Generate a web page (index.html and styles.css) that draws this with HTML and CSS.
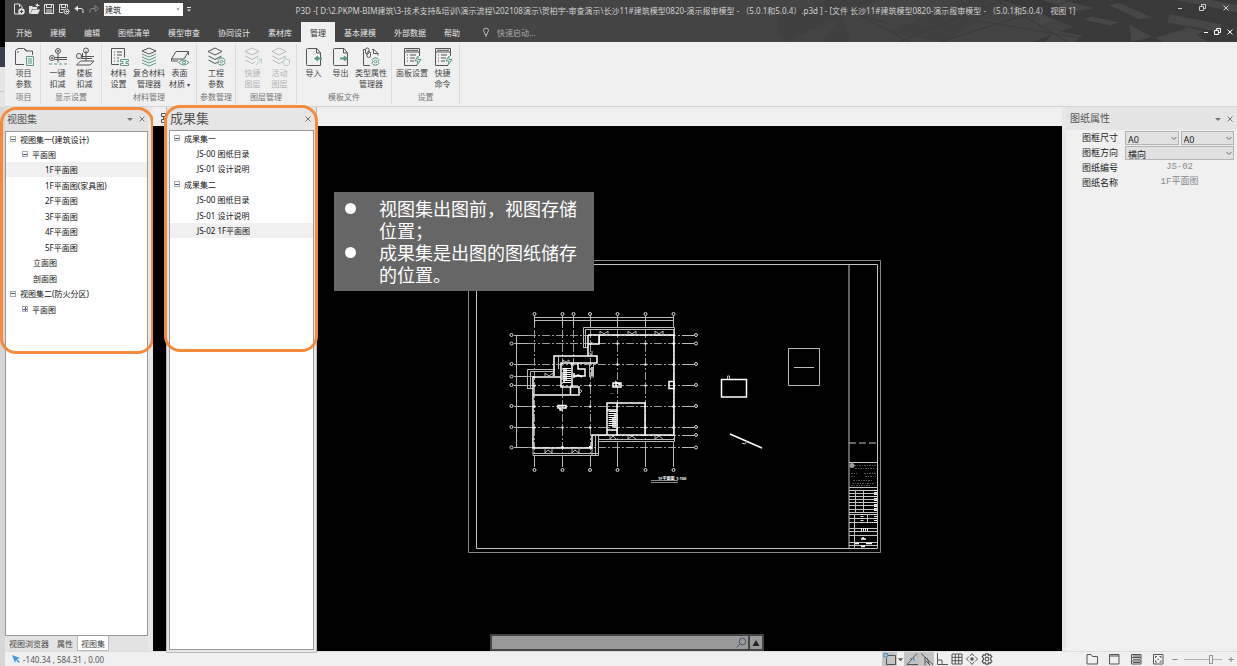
FILE: index.html
```html
<!DOCTYPE html>
<html lang="zh-CN">
<head>
<meta charset="utf-8">
<title>P3D</title>
<link rel="stylesheet" href="styles.css">
</head>
<body>
<svg class="defs" aria-hidden="true">
  <defs>
    <symbol id="i-doc" viewBox="0 0 20 20"><path d="M13 1.500H3.500Q2.500 1.500 2.500 2.500V17.500Q2.500 18.500 3.500 18.500H16.500V6zM12.500 1.500V6H16.500"/></symbol>
    <symbol id="i-layers" viewBox="0 0 20 20"><path d="M9 1 16 4.500 9 8 2 4.500zM2.500 9 9 12.500 15.500 9M2.500 13 9 16.500 12 15"/></symbol>
    <symbol id="i-gear" viewBox="0 0 10 10"><path d="M4 .7h2l.4 1.300 1.300-.5L9 3 8 4.300v1.200L9 7 7.700 8.500 6.400 8 6 9.300H4L3.600 8l-1.300.5L1 7l1-1.500V4.300L1 3l1.300-1.500 1.300.5z"/><circle cx="5" cy="5" r="1.500"/></symbol>
    <symbol id="i-panel" viewBox="0 0 20 20"><path d="M15 18.500H2.500V1.500H17.500V9M2.500 5H17.500M4 3.300H16M5 8h1M8 8h6M5 11h1M8 11h5M5 14h1M8 14h4"/><path class="green" d="M16 9 13 14h3l-1 4 4-5.500h-3z"/></symbol>
    <symbol id="i-restore" viewBox="0 0 8 8"><path d="M2.500 2.500V.5h4v4h-2M.5 2.500h4v4h-4z"/></symbol>
    <symbol id="i-close" viewBox="0 0 8 8"><path d="m1.500 1.500 5 5m0-5-5 5"/></symbol>
    <symbol id="i-min" viewBox="0 0 8 8"><path d="M2 4.500h4"/></symbol>
    <symbol id="i-chev" viewBox="0 0 8 8"><path d="m1.500 3 2.500 2.500L6.500 3"/></symbol>
    <symbol id="i-down" viewBox="0 0 8 8"><path class="solid" d="M1 3h6L4 6z"/></symbol>
  </defs>
</svg>
<div class="screen">
  <div class="edge"></div>
  <div class="app">
    <header class="head">
      <svg class="head-art" viewBox="0 0 460 41" preserveAspectRatio="xMaxYMid slice" aria-hidden="true">
        <path class="dim" d="M55 41 75 14 83 41zM120 32 190 0h45l-60 41zM0 20 60 0h50L20 41z"/>
        <path class="dark" d="M230 0H460V41H260l40-15-45-18z"/>
        <path class="lite" d="m290 0 30 8-18 3-32-11zM318 16l28 6-10 3-26-6zM345 3l32 14-12 2-30-14zM355 24l22 12-20 5zM394 14l52 10-4 7-50-9zM400 0l60 12V5L435 0zM283 30l26 5-8 6h-28zM380 37l30-9 22 13h-44zM265 14l16 5-20 8zM408 26l20 4-9 5z"/>
        <path class="ray" d="M90 14 140 41M130 41 230 0M170 41 300 0M205 20 330 41M225 0l70 41M60 5l60 18"/>
      </svg>
      <div class="titlebar">
        <div class="qat">
          <button aria-label="新建"><svg viewBox="0 0 12 12"><path d="M7 11H1.500V1h5L9 3.500V5M6.500 1v3"/><circle class="solid" cx="8.500" cy="8.500" r="3.200"/><path class="cut" d="M8.500 6.800v3.400M6.800 8.500h3.400"/></svg></button>
          <button aria-label="打开"><svg viewBox="0 0 12 12"><path class="solid" d="M1 10.500V3h3l1 1h4v2H4L2.500 10.500zM4.500 6.500H12l-2 4.500H2.500zM7 2l3-1.500V2h1.500v1H10v1z"/></svg></button>
          <button aria-label="保存"><svg viewBox="0 0 12 12"><path d="M1.500 1.500h9v9h-9zM3.500 1.500v3h5v-3M3 7h6M3 9h6"/></svg></button>
          <button aria-label="另存为"><svg viewBox="0 0 12 12"><path d="M5 9.500H1.500v-8h8v3M3.500 1.500v3h4v-3M3 6.500h3"/><circle cx="8.500" cy="8.500" r="2.500"/><path d="M7.500 8.500h3M8.500 7.500v2"/></svg></button>
          <button aria-label="撤销"><svg viewBox="0 0 12 12"><path class="solid" d="M1.500 5.500 5 2.500v6z"/><path d="M4 5.500h4q2 0 2 2V10"/></svg></button>
          <button class="off" aria-label="重做"><svg viewBox="0 0 12 12"><path d="M10.500 5.500 7 2.500v6zM7 5.500H4q-2 0-2 2V10"/></svg></button>
          <label class="combo"><select aria-label="专业"><option>建筑</option></select><svg viewBox="0 0 8 8" aria-hidden="true"><path class="solid" d="M2.500 3.500h3L4 5z"/></svg></label>
          <button class="more" aria-label="自定义工具栏"><svg viewBox="0 0 12 12"><path d="M4 4.500h4"/><path class="solid" d="M4 6.500h4l-2 2z"/></svg></button>
        </div>
        <h1 class="title">P3D -[ D:\2.PKPM-BIM建筑\3-技术支持&amp;培训\演示流程\202108演示\贺柏宇-审查演示\长沙11#建筑模型0820-演示报审模型 - （5.0.1和5.0.4）.p3d ] - [文件 长沙11#建筑模型0820-演示报审模型 - （5.0.1和5.0.4） 视图 1]</h1>
        <div class="win wide">
          <button aria-label="最小化"><svg><use href="#i-min"/></svg></button>
          <button aria-label="还原"><svg><use href="#i-restore"/></svg></button>
          <button aria-label="关闭"><svg><use href="#i-close"/></svg></button>
        </div>
      </div>
      <div class="menubar">
        <nav class="tabs">
          <button>开始</button><button>建模</button><button>编辑</button><button>图纸清单</button><button>模型审查</button><button>协同设计</button><button>素材库</button><button class="on">管理</button><button>基本建模</button><button>外部数据</button><button>帮助</button>
        </nav>
        <label class="quick"><svg viewBox="0 0 8 10" aria-hidden="true"><path d="M3 7.500Q3 6 2 5 1 3 2.200 1.700 4 .3 5.800 1.700 7 3 6 5 5 6 5 7.500zM3 9h2"/></svg><input type="text" placeholder="快速启动..." aria-label="快速启动"></label>
        <div class="win">
          <button aria-label="最小化文档"><svg><use href="#i-min"/></svg></button>
          <button aria-label="还原文档"><svg><use href="#i-restore"/></svg></button>
          <button aria-label="关闭文档"><svg><use href="#i-close"/></svg></button>
        </div>
      </div>
    </header>

    <section class="ribbon" aria-label="管理">
      <div class="group">
        <div class="tools">
          <button><svg viewBox="0 0 20 20"><path d="M10 17.500H1.500v-14L4 1.500h5.500L12 4h6.500v4M3 5h2M10 1.500 13 4"/><path class="green" d="M12.500 9.500h7v9h-7zM14 12h4M14 14h4M14 16h4"/></svg>项目<br>参数</button>
        </div>
        <h2>项目</h2>
      </div>
      <div class="group">
        <div class="tools">
          <button><svg viewBox="0 0 20 20"><circle cx="10" cy="4" r="2.500"/><circle cx="10" cy="4" r=".7"/><circle cx="4" cy="11" r="2.500"/><circle cx="4" cy="11" r=".7"/><path d="M10 6.500V15.500M6.500 10.500H19M6.500 12.500H19"/><path class="green" d="M1 17h3m2 0h3m2 0h3m2 0h3"/></svg>一键<br>扣减</button>
          <button><svg viewBox="0 0 20 20"><circle cx="11" cy="3.500" r="2.500"/><circle cx="4" cy="9" r="2.500"/><path d="M11 3.500V14M6 9.500h13M6 11.500h11M2 17.500 5.500 14H19l-4 4H1.500zM7.500 6v6"/></svg>楼板<br>扣减</button>
        </div>
        <h2>显示设置</h2>
      </div>
      <div class="group">
        <div class="tools">
          <button><svg viewBox="0 0 20 20"><path d="M10 17.500H2.500v-16h13v9M5 5h1M8 5h5M5 8h1M8 8h5M5 11h1M8 11h2M5 14h1M8 14h2"/><path class="green" d="M11.500 12.500h8v2H17v2h2.500v2h-8v-2H14v-2h-2.500z"/></svg>材料<br>设置</button>
          <button class="w"><svg viewBox="0 0 20 20"><path d="M10 1 17 4 10 7 3 4z"/><path class="green" d="m3 7 7 3 7-3M3 10l7 3 7-3M3 13l7 3 7-3M3 16l7 3 7-3"/></svg>复合材料<br>管理器</button>
          <button><svg viewBox="0 0 20 20"><path d="M6 4.500h12.500L14 12H1.500zM1.500 12v2H8M18.500 4.500V8"/><path class="green" d="M8.500 15.500q5-5 10.500 0-5 5-10.500 0z"/><circle class="green" cx="14" cy="15.500" r="1.500"/></svg>表面<br>材质 <span class="caret">▾</span></button>
        </div>
        <h2>材料管理</h2>
      </div>
      <div class="group">
        <div class="tools">
          <button><svg viewBox="0 0 20 20"><use href="#i-layers"/><use class="green" href="#i-gear" x="11" y="10" width="9" height="9"/></svg>工程<br>参数</button>
        </div>
        <h2>参数管理</h2>
      </div>
      <div class="group">
        <div class="tools">
          <button disabled><svg viewBox="0 0 20 20"><use href="#i-layers"/><path class="green" d="m13 18 5-5m-4-1h4.500v4.500"/></svg>快捷<br>图层</button>
          <button disabled><svg viewBox="0 0 20 20"><use href="#i-layers"/><path class="green" d="M14 15V9.500h1.500V12l4 1v3.500l-1.500 2h-3L12 15z"/></svg>活动<br>图层</button>
        </div>
        <h2>图层管理</h2>
      </div>
      <div class="group">
        <div class="tools">
          <button><svg viewBox="0 0 20 20"><use href="#i-doc"/><path class="green thick" d="M18 11.500h-6m2-2-2.500 2 2.500 2"/></svg>导入</button>
          <button><svg viewBox="0 0 20 20"><use href="#i-doc"/><path class="green thick" d="M9 11.500h6m-2-2 2.500 2-2.500 2"/></svg>导出</button>
          <button class="w"><svg viewBox="0 0 20 20"><path d="M9 18.500H2.500v-16H4M11 2.500h2l4 4v2M12.500 2.500v4H17"/><rect x="4.500" y="1" width="3.500" height="6" rx="1.700"/><rect x="6" y="4.500" width="3.500" height="6" rx="1.700"/><use class="green" href="#i-gear" x="10" y="10" width="9" height="9"/></svg>类型属性<br>管理器</button>
        </div>
        <h2>模板文件</h2>
      </div>
      <div class="group">
        <div class="tools">
          <button class="w"><svg><use href="#i-panel"/></svg>面板设置</button>
          <button><svg><use href="#i-panel"/></svg>快捷<br>命令</button>
        </div>
        <h2>设置</h2>
      </div>
    </section>

    <main class="work">
      <aside class="dock">
        <div class="bar"><h3>视图集</h3><button aria-label="菜单"><svg><use href="#i-down"/></svg></button><button aria-label="关闭"><svg><use href="#i-close"/></svg></button></div>
        <ul class="tree">
          <li><i class="box"></i>视图集一(建筑设计)</li>
          <li class="l1"><i class="box"></i>平面图</li>
          <li class="l3 sel">1F平面图</li>
          <li class="l3">1F平面图(家具图)</li>
          <li class="l3">2F平面图</li>
          <li class="l3">3F平面图</li>
          <li class="l3">4F平面图</li>
          <li class="l3">5F平面图</li>
          <li class="l2">立面图</li>
          <li class="l2">剖面图</li>
          <li><i class="box"></i>视图集二(防火分区)</li>
          <li class="l1"><i class="box plus"></i>平面图</li>
        </ul>
        <div class="dock-tabs"><button>视图浏览器</button><button>属性</button><button class="on">视图集</button></div>
        <div class="mark mark-dock"></div>
      </aside>

      <section class="doc">
        <div class="doc-tabs"><svg viewBox="0 0 12 12" aria-hidden="true"><path d="M1.500 1.500h4v3h-4zM1.500 7.500h4v3h-4zM3.500 4.500v3M7 3h4M7 9h4"/></svg></div>
        <div class="canvas">
          <svg class="plan" viewBox="153 126 909 525" preserveAspectRatio="xMidYMid meet" role="img" aria-label="1F平面图">
            <g class="frame">
              <path class="g" d="M468.500 260.500H880.500V552.500H468.500z"/><path d="M476.500 264.500H877.500V548.500H476.500zM849 264V548"/>
              <path class="dash" d="M849 443H877"/>
              <path d="M849 462.500h28M849 487.500h28M849 490.500h28M849 493.500h28M849 496.500h28M849 499.500h28M849 502.500h28M849 505.500h28M849 509.500h28M849 512.500h28M849 514.500h28M849 518.500h28M849 522.500h28M849 528.500h28M849 531.500h28M849 535.500h28M849 542.500h28M849 545.500h28M855.500 490v22M863.500 490v22M854.500 514v34M867.500 514v9"/>
              <path class="tiny" d="M854 465.500h22M855 468.500h20M851 473.500h6m7 0h12M851 476.500h5m9 0h11M853 480.500h20M852 483.500h22M851 485.500h20"/>
              <circle class="fill" cx="852" cy="465.500" r="2.500"/>
              <path class="bits" d="M875.500 490v22M862 514v9M875.500 514v9M861 529.500h7"/>
              <path class="wall" d="M861 539h5M863 537v2M855 543.500h4M861 546.500h4M866 543.500h6"/>
            </g>
            <g class="axes">
              <path d="M534.500 316V467M562.500 316V467M573.500 316V366M590.500 316V467M617.500 316V467M645.500 316V467M673.500 316V467M514 335.500H693M514 343.500H693M514 364.500H693M514 376.500H535M514 385.500H693M514 406.500H693M514 427.500H693M598 435.500H693M514 447.500H693"/>
            </g>
            <path class="thin" d="M534 317.500H674M534 320.500H674M516.500 335V447M534.500 316v11M562.500 316v10M573.500 316v10M590.500 316v10M617.500 316v10M645.500 316v10M673.500 316v10M534.500 457v10M562.500 457v10M590.500 457v10M617.500 445v22M645.500 445v22M673.500 445v22M514 335.500h14M514 343.500h14M514 364.500h14M514 376.500h14M514 385.500h14M514 406.500h14M514 427.500h14M514 447.500h14M682 335.500h12M682 343.500h12M682 364.500h12M682 385.500h12M682 406.500h12M682 427.500h12M682 435.500h12M682 447.500h12"/>
            <g class="nodes">
              <circle cx="534.500" cy="314" r="1.500"/><circle cx="562.500" cy="314" r="1.500"/><circle cx="573.500" cy="314" r="1.500"/><circle cx="590" cy="314" r="1.500"/><circle cx="617.500" cy="314" r="1.500"/><circle cx="645.500" cy="314" r="1.500"/><circle cx="673.500" cy="314" r="1.500"/>
              <circle cx="534.500" cy="470" r="1.500"/><circle cx="562.500" cy="470" r="1.500"/><circle cx="590" cy="470" r="1.500"/><circle cx="617.500" cy="470" r="1.500"/><circle cx="645.500" cy="470" r="1.500"/><circle cx="673.500" cy="470" r="1.500"/>
              <circle cx="511.500" cy="335" r="1.500"/><circle cx="511.500" cy="343.500" r="1.500"/><circle cx="511.500" cy="364" r="1.500"/><circle cx="511.500" cy="376.500" r="1.500"/><circle cx="511.500" cy="385" r="1.500"/><circle cx="511.500" cy="406" r="1.500"/><circle cx="511.500" cy="427" r="1.500"/><circle cx="511.500" cy="447.500" r="1.500"/>
              <circle cx="696" cy="335" r="1.500"/><circle cx="696" cy="343.500" r="1.500"/><circle cx="696" cy="364" r="1.500"/><circle cx="696" cy="385" r="1.500"/><circle cx="696" cy="406" r="1.500"/><circle cx="696" cy="427" r="1.500"/><circle cx="696" cy="435" r="1.500"/><circle cx="696" cy="447.500" r="1.500"/>
            </g>
            <path class="thin" d="M583.500 347V327.500H674.500V335M585.500 347V329.500H674M583 347.500h5M599.500 335v9M527.500 388V369.500H555M530.500 388V371.500H554M527 388.500h6M558.500 357v12M533 448v7.500H598.500V441.500H674.500V435M598 439.500H674M592 455V448M595.500 455V436M598.500 455V436M533 453.500h65"/>
            <path class="wall" d="M588 335H674V435H592V448H533V377H561M588 335V356M588 344H599V335M554 376V356H597V363H561V387H579V395H533M572 363V387M570.500 387V395M607 435V403H645V435M617 403V435M578 363V369H585V376H573M607 430H617M607 410H617"/>
            <path class="stair" d="M567 368V384M612.500 411V427"/>
            <path class="wall" d="M564 368v15M566 368v12M615 414v14M613 418v9"/>
            <path class="thin" d="M600 335v-4l4 3 4-3v4M628 335v-4l4 3 4-3v4M655 335v-4l4 3 4-3v4M545 377v-4l4 3 4-3v4M563 363v-3l3 2 3-2v3M545 448v5l3-3 4 3v-5M572 448v5l3-3 4 3v-5M610 435v4l3-3 3 3M628 435v4l4-3 4 3M655 435v4l4-3 4 3M578 395l4-4-3-2M588 352l4 3v-4M590 342l5 2M589.500 364v13h4v-13"/>
            <path class="wall" d="M613 383h8v4h-8zM616 387v-5l4 3M669 381.500h5v7h-5zM558 405.500h8v2.500h-8zM560 408v2h3M574 373v4l4-2 4 2M592 367v9"/>
            <path class="dots" d="M534.500 385.500h0M534.500 406.500h0M534.500 427.500h0M562.500 427.500h0M590 447h0M590 385.500h0M590 406.500h0M590 427.500h0M617.500 343.500h0M617.500 364.500h0M645.500 343.500h0M645.500 364.500h0M645.500 385.500h0M645.500 427.500h0M673.500 343.500h0M673.500 364.500h0M673.500 406.500h0M673.500 427.500h0M562.500 447h0"/>
            <path class="faint" d="M610 393.500h4"/>
            <path class="wall" d="M721.500 379.500H746.500V397H721.500zM730 434l32 14"/>
            <path class="thin" d="M727.500 379v-3h2v3M742 443l3 1 2-3M788.500 348.500H819.500V385.500H788.500zM794 367.500h20"/>
            <path class="g thin" d="M651 480.500h27M651 482.500h27"/>
            <text class="cap" x="658" y="480">1F平面图</text><text class="cap" x="676" y="480">1:100</text>
          </svg>
          <div class="note">
            <ul>
              <li>视图集出图前，视图存储位置；</li>
              <li>成果集是出图的图纸储存的位置。</li>
            </ul>
          </div>
          <div class="cmd"><input type="text" aria-label="命令"><svg viewBox="0 0 12 12" aria-hidden="true"><circle cx="7.500" cy="4.500" r="3.300"/><path d="M5 7 1.500 10.500"/></svg><button aria-label="展开"><svg viewBox="0 0 8 8"><path d="M.5 7 4 1l3.500 6z"/></svg></button></div>
        </div>
        <section class="float">
          <div class="bar"><h3>成果集</h3><button aria-label="关闭"><svg><use href="#i-close"/></svg></button></div>
          <ul class="tree">
            <li><i class="box"></i>成果集一</li>
            <li class="l3">JS-00 图纸目录</li>
            <li class="l3">JS-01 设计说明</li>
            <li><i class="box"></i>成果集二</li>
            <li class="l3">JS-00 图纸目录</li>
            <li class="l3">JS-01 设计说明</li>
            <li class="l3 sel">JS-02 1F平面图</li>
          </ul>
          <div class="mark mark-float"></div>
        </section>
      </section>

      <aside class="props">
        <div class="bar"><h3>图纸属性</h3><button aria-label="菜单"><svg><use href="#i-down"/></svg></button><button aria-label="关闭"><svg><use href="#i-close"/></svg></button></div>
        <div class="form">
          <label for="size">图框尺寸</label>
          <div class="fields"><span class="pick"><select id="size"><option>A0</option></select><svg><use href="#i-chev"/></svg></span><span class="pick"><select aria-label="图框尺寸二"><option>A0</option></select><svg><use href="#i-chev"/></svg></span></div>
          <label for="dir">图框方向</label>
          <div class="fields"><span class="pick"><select id="dir"><option>横向</option></select><svg><use href="#i-chev"/></svg></span></div>
          <span>图纸编号</span><output>JS-02</output>
          <span>图纸名称</span><output>1F平面图</output>
        </div>
      </aside>
    </main>

    <footer class="status">
      <svg class="ptr" viewBox="0 0 10 10" aria-hidden="true"><path d="m1 1 8 3-3 1 3 3-1 1-3-3-1 3z"/></svg>
      <span class="pos">-140.34 , 584.31 , 0.00</span>
      <div class="snaps">
        <button class="on" aria-label="捕捉"><svg viewBox="0 0 14 14"><path d="M4 3.500h8.500v9h-9V6"/><path class="blue" d="M1 1.500h3.500V5H1z"/></svg></button>
        <button class="slim" aria-label="捕捉选项"><svg viewBox="0 0 8 8"><path class="solid" d="M1 2.500h6L4 6z"/></svg></button>
        <button class="on" aria-label="极轴"><svg viewBox="0 0 14 14"><path d="M12 1.500 2 12.500h11"/><path class="blue" d="M5 6.500h4v3"/></svg></button>
        <button class="on" aria-label="追踪"><svg viewBox="0 0 14 14"><path d="m1 1.500 12 11M5 5v8M6 9l4 4M7 6l2 6"/></svg></button>
        <button aria-label="正交"><svg viewBox="0 0 14 14"><path d="M2.500 1v11.500H13M2.500 8h4.500v4"/></svg></button>
        <button aria-label="栅格"><svg viewBox="0 0 14 14"><path d="M2 2h10v10H2zM2 5.300h10M2 8.700h10M5.300 2v10M8.700 2v10"/></svg></button>
        <button aria-label="移动"><svg viewBox="0 0 14 14"><path d="m5 4 2-2.500L9 4M5 10l2 2.500L9 10M4 4.500 1.500 7 4 9.500M10 4.500 12.500 7 10 9.500"/><circle class="solid" cx="7" cy="7" r="1.700"/></svg></button>
        <button aria-label="设置"><svg viewBox="0 0 14 14"><use href="#i-gear" x="1" y="1" width="12" height="12"/></svg></button>
      </div>
      <div class="views">
        <button aria-label="文件夹"><svg viewBox="0 0 14 14"><path d="M2 2.500h4L7.500 4.500h5v7.500H2z"/></svg></button>
        <button aria-label="窗口"><svg viewBox="0 0 14 14"><path d="M2.500 2.500h9.500v9.500H2.500zM2.500 4h9.500"/></svg></button>
        <button aria-label="列表"><svg viewBox="0 0 14 14"><path d="M2.500 2.500h9.500v9.500H2.500zM2.500 5.500h9.500M2.500 9h9.500M4 4h7M4 7.300h7M4 10.500h7"/></svg></button>
        <button aria-label="全屏"><svg viewBox="0 0 14 14"><path d="M2.500 2.500h9.500v9.500H2.500zM4.500 6V4.500H6M8.500 4.500H10V6M4.500 8.500V10H6M10 8.500V10H8.500M6.500 7.300h1.500"/></svg></button>
      </div>
      <div class="zoom"><button aria-label="缩小"><svg viewBox="0 0 8 8"><path d="M1.500 4.500h5"/></svg></button><input type="range" min="0" max="100" value="70" aria-label="缩放"><button aria-label="放大"><svg viewBox="0 0 8 8"><path d="M1.500 4.500h5M4 2v5"/></svg></button></div>
    </footer>
  </div>
</div>
</body>
</html>
```
FILE: styles.css
```css
* { box-sizing: border-box; }
body { margin: 0; font: 8px/11px "Noto Sans", "Noto Sans CJK SC", sans-serif; color: #333; }
h1, h2, h3 { margin: 0; font-weight: 400; }
ul { margin: 0; padding: 0; list-style: none; }
button { margin: 0; padding: 0; border: 0; background: none; font: inherit; color: inherit; display: grid; place-items: center; }
input, select { font: inherit; color: inherit; margin: 0; border: 0; border-radius: 0; min-width: 0; appearance: none; }
svg { display: block; fill: none; stroke: currentColor; }
.defs { position: absolute; width: 0; height: 0; }
.solid { fill: currentColor; stroke: none; }

.screen { display: flex; min-height: 100vh; }
.edge { flex: none; width: 5px; background: linear-gradient(#000 47px, #3b3e50 47px 67px, #e6e6e6 67px 91px, #ccc 91px 92px, #e6e6e6 92px 107px, #d6d6d6 107px); }
.app { flex: 1; min-width: 0; display: flex; flex-direction: column; background: #f0f0f0; }

.head { position: relative; background: #444; color: #e6e6e6; }
.head-art { position: absolute; top: 0; right: 0; width: 460px; height: 100%; stroke: none; }
.dim { fill: #404040; }
.dark { fill: #393939; }
.lite { fill: #474747; }
.ray { stroke: #3b3b3b; }
.titlebar, .menubar { position: relative; display: flex; align-items: center; }
.titlebar { height: 22px; align-items: flex-start; }
.qat { display: flex; align-items: center; padding: 2px 0 0 6px; }
.qat button { width: 15px; height: 14px; }
.qat button svg { width: 12px; height: 12px; }
.qat .off { color: #858585; }
.qat .more { width: 12px; }
.cut { stroke: #444; }
.combo { position: relative; width: 79px; height: 13px; margin-left: 3px; }
.combo select { width: 100%; height: 100%; padding: 0 1px; background: #fff; color: #222; display: block; }
.combo svg { position: absolute; right: 1px; top: 2px; width: 8px; height: 8px; color: #555; }
.title { flex: 1; min-width: 0; overflow: hidden; white-space: nowrap; text-align: center; font-size: 8px; line-height: 22px; color: #d0d0d0; }
.win { display: flex; gap: 4px; margin-left: auto; padding-right: 3px; color: #fff; }
.win button { width: 8px; height: 8px; }
.win svg { width: 8px; height: 8px; }
.win.wide { gap: 15px; padding: 4px 7px 0 0; color: #ccc; }
.menubar { height: 20px; }
.tabs { display: flex; padding-left: 2px; align-self: stretch; }
.tabs button { padding: 0 9px; }
.tabs .on { background: #f0f0f0; color: #333; }
.quick { display: flex; align-items: center; gap: 7px; padding-left: 13px; color: #bbb; }
.quick svg { width: 8px; height: 10px; }
.quick input { width: 60px; padding: 0; background: none; }
.quick input::placeholder { color: #aaa; opacity: 1; }

.ribbon { display: flex; padding: 2px 0 2px 2px; border-bottom: 1px solid #d4d4d4; color: #444; }
.group { display: flex; flex-direction: column; justify-content: space-between; padding: 3px 3px 2px; border-right: 1px solid #dcdcdc; height: 60px; }
.group h2 { font-size: 8px; line-height: 11px; text-align: center; color: #777; }
.tools { display: flex; justify-content: center; align-items: flex-start; }
.tools button { width: 27px; white-space: nowrap; text-align: center; display: block; line-height: 11px; }
.tools .w { width: 34px; }
.tools svg { width: 20px; height: 20px; margin: 0 auto; color: #555; overflow: visible; }
.tools button:disabled { color: #b4b4b4; }
.tools button:disabled svg { color: #b8b8b8; }
.green { stroke: #5d9c84; }
.tools button:disabled .green { stroke: #b4cfc6; }
.thick { stroke-width: 2; }
.caret { font-size: 6px; line-height: 8px; }

.work { flex: 1; display: flex; min-height: 0; background: #e8e8e8; }
.bar { display: flex; align-items: center; color: #777; }
.bar h3 { flex: 1; font-size: 10px; line-height: 24px; padding-left: 2px; color: #555; }
.bar button { width: 12px; height: 12px; }
.bar svg { width: 8px; height: 8px; }
.dock { position: relative; width: 143px; margin-right: 5px; display: flex; flex-direction: column; background: #e3e3e3; }
.tree { flex: 1; background: #fff; border: 1px solid #999; color: #111; }
.tree li { display: flex; align-items: center; height: 15px; padding-left: 4px; gap: 4px; white-space: nowrap; }
.tree li:nth-child(even) { height: 16px; }
.tree li:first-child { height: 14px; }
.tree .l1 { padding-left: 16px; }
.tree .l2 { padding-left: 27px; }
.tree .l3 { padding-left: 39px; }
.float .l3 { padding-left: 27px; }
.tree .sel { background: #f0f0f0; }
.box { width: 6px; height: 6px; border: 1px solid #aaa; background: linear-gradient(#4a5a90, #4a5a90) center / 4px 1px no-repeat; }
.box.plus { background: linear-gradient(#4a5a90, #4a5a90) center / 4px 1px no-repeat, linear-gradient(#4a5a90, #4a5a90) center / 1px 4px no-repeat; }
.dock-tabs { display: flex; height: 15px; color: #444; }
.dock-tabs button { padding: 0 4px; }
.dock-tabs .on { padding: 0 3px; background: #fff; border: 1px solid #bbb; border-top: 0; }
.mark { position: absolute; height: 247px; border: 3px solid #f58a3c; border-radius: 16px; pointer-events: none; }
.mark-dock { top: 0; left: -5px; right: -6px; }
.mark-float { top: -2px; left: -3px; right: -2px; }

.doc { position: relative; flex: 1; min-width: 0; display: flex; flex-direction: column; }
.doc-tabs { height: 19px; background: #f0f0f0; padding: 5px 0 0 7px; color: #555; }
.doc-tabs svg { width: 12px; height: 12px; }
.canvas { position: relative; flex: 1; background: #000; }
.plan { position: absolute; inset: 0; width: 100%; height: 100%; }
.frame { stroke: #c4c4c4; }
.g { stroke: #888; }
.dash { stroke-dasharray: 7 3; }
.tiny { stroke: #555; stroke-dasharray: 2 1 1 1; }
.fill { fill: #999; stroke: none; }
.bits { stroke: #eee; stroke-width: 3; stroke-dasharray: 1 1; }
.axes { stroke: #9a9a9a; stroke-dasharray: 8 2 2 2; }
.thin { stroke: #bbb; }
.g.thin { stroke: #888; }
.nodes { stroke: #ddd; fill: #000; }
.wall { stroke: #fff; stroke-width: 1.5; }
.stair { stroke: #fff; stroke-width: 8; stroke-dasharray: 1 1; }
.dots { stroke: #fff; stroke-width: 2; stroke-linecap: square; }
.faint { stroke: #444; }
.cap { fill: #fff; stroke: none; font-size: 4px; font-weight: 700; }
.note { position: absolute; left: 181px; top: 66px; width: 260px; padding: 5px 0 6px 12px; background: #666; color: #fff; font-size: 18px; line-height: 22px; font-family: "Noto Sans CJK SC", sans-serif; }
.note li { position: relative; padding: 0 0 0 33px; }
.note li::before { content: ""; position: absolute; left: -1px; top: 6px; width: 11px; height: 11px; border-radius: 50%; background: #fff; }
.cmd { position: absolute; left: 50%; bottom: 0; width: 274px; height: 17px; margin-left: -118px; display: flex; align-items: center; background: #999; border: 2px solid #444; }
.cmd input { flex: 1; background: none; }
.cmd > svg { width: 12px; height: 12px; color: #46546e; }
.cmd button { width: 14px; align-self: stretch; border-left: 2px solid #444; margin-left: 1px; }
.cmd button svg { width: 8px; height: 8px; fill: #222; stroke: none; }
.float { position: absolute; left: 13px; top: 0; bottom: -2px; width: 151px; display: flex; flex-direction: column; padding: 0 2px 2px; background: #e6e6e6; border: 1px solid #bbb; border-top: 0; }
.float h3 { font-size: 13px; line-height: 23px; padding-left: 1px; }

.props { width: 171px; margin-left: 4px; background: #f0f0f0; }
.props .bar { background: #e5e5e5; padding-right: 1px; }
.props h3 { padding-left: 4px; line-height: 23px; }
.form { display: grid; grid-template-columns: 55px 1fr; column-gap: 4px; padding-right: 3px; font-size: 9px; line-height: 15px; color: #222; }
.form > :nth-child(odd) { text-align: right; padding-right: 3px; }
.form output { text-align: center; color: #888; font-family: "Liberation Mono", "Noto Sans CJK SC", monospace; }
.fields { display: flex; gap: 2px; padding-top: 1px; }
.pick { flex: 1; position: relative; }
.pick select { display: block; width: 100%; height: 14px; padding: 0 2px; background: #e1e1e1; border: 1px solid #b4b4b4; }
.pick svg { position: absolute; right: 1px; top: 3px; width: 8px; height: 8px; color: #666; pointer-events: none; }

.status { display: flex; align-items: center; height: 15px; padding-right: 1px; border-top: 1px solid #ddd; color: #555; overflow: hidden; }
.ptr { width: 10px; height: 10px; margin: 0 2px 0 6px; fill: #3f97e0; stroke: none; }
.status button { width: 15px; height: 15px; }
.status button svg { width: 14px; height: 14px; }
.status .slim { width: 7px; }
.status .slim svg { width: 7px; height: 7px; }
.status .on { background: #c4c4c4; }
.blue { stroke: #3f8fd0; }
.snaps { display: flex; margin-left: auto; margin-right: 90px; }
.views { display: flex; gap: 7px; margin-right: 5px; }
.zoom { display: flex; align-items: center; color: #888; }
.zoom button { width: 10px; }
.zoom button svg { width: 8px; height: 8px; }
.zoom input { width: 44px; height: 12px; margin: 0 1px; background: linear-gradient(#b0b0b0, #b0b0b0) center / 38px 1px no-repeat; }
.zoom input::-webkit-slider-thumb { appearance: none; width: 4px; height: 9px; background: #eee; border: 1px solid #999; }
```
